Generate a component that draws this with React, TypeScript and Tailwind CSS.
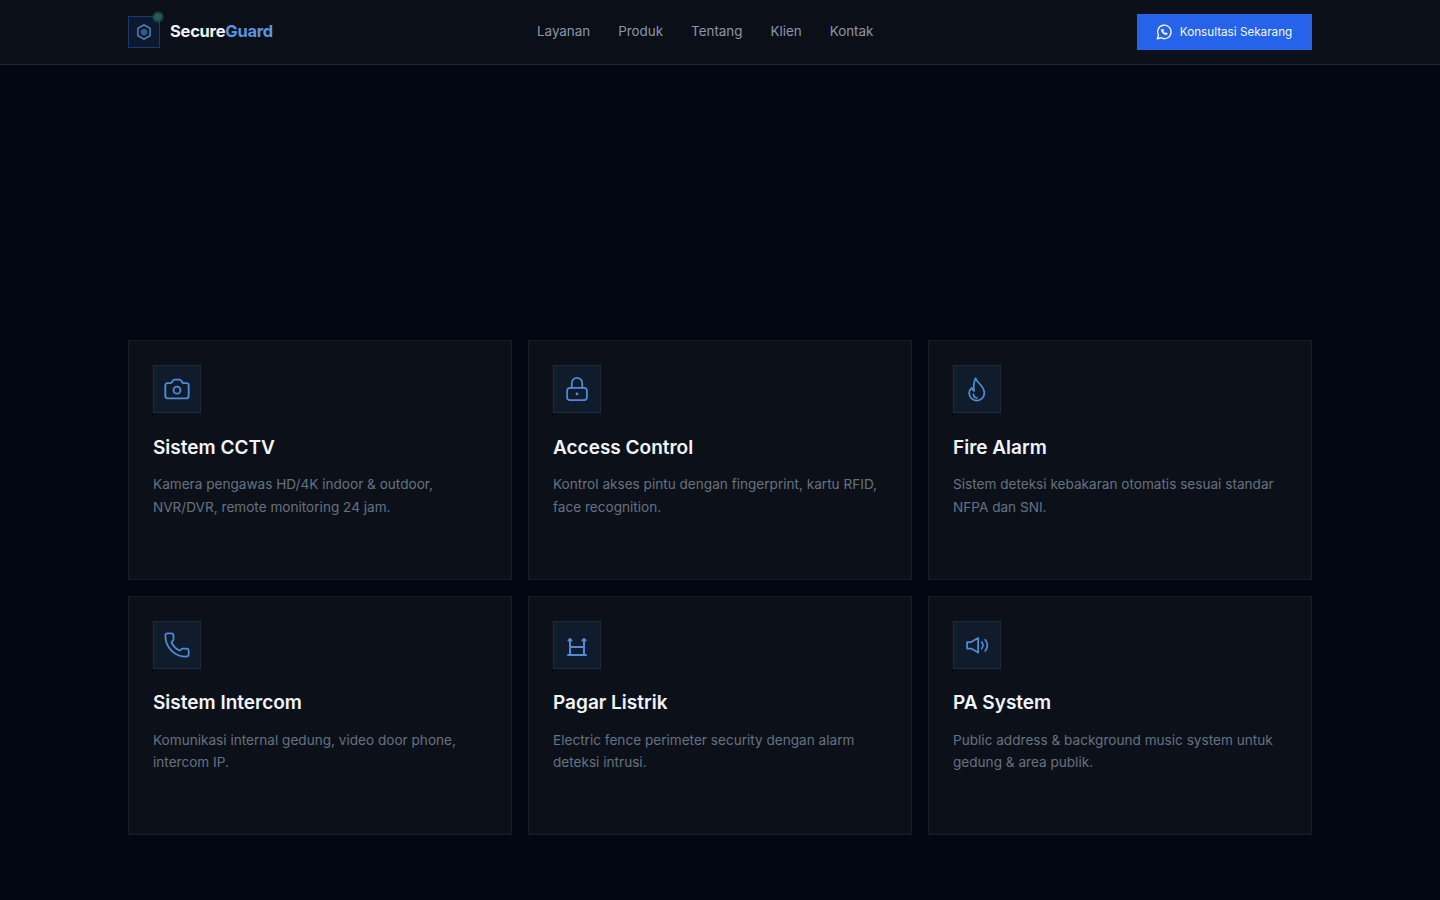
import { Camera, Phone } from "lucide-react"
import { ReactNode } from "react"

const LockIcon = () => (
  <svg width="28" height="28" viewBox="0 0 24 24" fill="none" stroke="currentColor" strokeWidth="1.5" strokeLinecap="round" strokeLinejoin="round">
    <rect x="3.5" y="11" width="17" height="10.5" rx="2.5" />
    <path d="M7.5 11V7a4.5 4.5 0 0 1 9 0v4" />
    <circle cx="12" cy="16.2" r="1.2" fill="currentColor" stroke="none" />
  </svg>
)

const FlameIcon = () => (
  <svg width="28" height="28" viewBox="0 0 24 24" fill="none" stroke="currentColor" strokeWidth="1.5" strokeLinecap="round" strokeLinejoin="round">
    <path d="M10.9 2.8C11.5 6.5 18.3 9 18.3 15.5A6.5 6.5 0 0 1 5.3 15.5C5.3 13.8 6 12.3 7.4 11C7.8 12.5 8.5 13.3 9.5 13.7C9 10 9.3 5.5 10.9 2.8z" />
    <path d="M9 16.5c0 2 1.3 3 3 3" />
  </svg>
)

const FenceIcon = () => (
  <svg width="28" height="28" viewBox="0 0 24 24" fill="none" stroke="currentColor" strokeWidth="1.7" strokeLinecap="round" strokeLinejoin="round">
    <path d="M6 7v13.6M18 7v13.6M6 13.7h12M4.3 20.6h15.4" />
    <path d="M4.7 8.2L6 6.9l1.3 1.3M16.7 8.2L18 6.9l1.3 1.3" />
  </svg>
)

const SpeakerIcon = () => (
  <svg width="28" height="28" viewBox="0 0 24 24" fill="none" stroke="currentColor" strokeWidth="1.5" strokeLinecap="round" strokeLinejoin="round">
    <path d="M3.5 9.5H7l6-3.5v12.5l-6-3.5H3.5z" />
    <path d="M16 9.5a4 4 0 0 1 0 5.5" />
    <path d="M19 7.5a7 7 0 0 1 0 9.5" />
  </svg>
)

const WhatsappIcon = () => (
  <svg width="18" height="18" viewBox="0 0 24 24" fill="none" stroke="currentColor" strokeWidth="1.8" strokeLinecap="round" strokeLinejoin="round">
    <path d="M3 21l1.6-4.7A9 9 0 1 1 8 19.7L3 21z" />
    <path d="M8.5 9c0 3.5 3 6.5 6.5 6.5.9 0 1.5-.6 1.5-1.5l-2-1-1 .8c-1.100-.5-2-1.400-2.500-2.500l.8-1-1-2c-.9 0-1.800.7-1.800.7z" fill="currentColor" strokeWidth="0.8" />
  </svg>
)

const LogoIcon = () => (
  <svg width="18" height="18" viewBox="0 0 24 24" fill="none" stroke="currentColor" strokeWidth="1.8" strokeLinejoin="round">
    <path d="M12 2.5l8.2 4.75v9.5L12 21.5l-8.2-4.75v-9.5z" />
    <circle cx="12" cy="12" r="4.5" fill="currentColor" fillOpacity="0.55" stroke="none" />
  </svg>
)

const services: { icon: ReactNode; title: string; text: string[] }[] = [
  { icon: <Camera size={28} strokeWidth={1.6} />, title: "Sistem CCTV", text: ["Kamera pengawas HD/4K indoor & outdoor,", "NVR/DVR, remote monitoring 24 jam."] },
  { icon: <LockIcon />, title: "Access Control", text: ["Kontrol akses pintu dengan fingerprint, kartu RFID,", "face recognition."] },
  { icon: <FlameIcon />, title: "Fire Alarm", text: ["Sistem deteksi kebakaran otomatis sesuai standar", "NFPA dan SNI."] },
  { icon: <Phone size={28} strokeWidth={1.5} />, title: "Sistem Intercom", text: ["Komunikasi internal gedung, video door phone,", "intercom IP."] },
  { icon: <FenceIcon />, title: "Pagar Listrik", text: ["Electric fence perimeter security dengan alarm", "deteksi intrusi."] },
  { icon: <SpeakerIcon />, title: "PA System", text: ["Public address & background music system untuk", "gedung & area publik."] },
]

const nav = ["Layanan", "Produk", "Tentang", "Klien", "Kontak"]

export default function App() {
  return (
    <div className="min-h-[900px] bg-[#030712] font-['Inter',sans-serif]">
      <header className="h-[65px] bg-[#0a0f18] border-b border-[#1a2738]">
        <div className="mx-auto w-[1184px] h-16 flex items-center">
          <div className="w-[409px] flex items-center gap-2.5">
            <div className="relative w-8 h-8 flex items-center justify-center border border-[#1e3a66] bg-[#0c1a2f] text-[#5a8ed0]">
              <LogoIcon />
              <span className="absolute -top-[5px] -right-[4px] w-2.5 h-2.5 rounded-full bg-[#285a57] blur-[1px]"></span>
            </div>
            <div className="-mt-0.5 text-[16.5px] font-bold tracking-[-0.25px] text-[#f1f5f9]">
              Secure<span className="text-[#5a94e2]">Guard</span>
            </div>
          </div>
          <nav className="-mt-px flex items-center gap-7 text-[13.4px] text-[#8d97a6]">
            {nav.map((n) => (
              <span key={n}>{n}</span>
            ))}
          </nav>
          <button className="ml-auto w-[175px] h-9 pr-[2px] flex items-center justify-center gap-[7px] bg-[#2563eb] text-[#f4f7ff] text-[11.7px]">
            <WhatsappIcon />
            <span className="pt-0.5">Konsultasi Sekarang</span>
          </button>
        </div>
      </header>

      <section className="h-[275px]"></section>

      <main className="mx-auto w-[1184px] grid grid-cols-3 gap-4">
        {services.map((s) => (
          <div key={s.title} className="h-[239.5px] p-6 bg-[#0c1119] border border-[#171e2a]">
            <div className="w-12 h-12 flex items-center justify-center bg-[#101b2b] border border-[#1c2a3d] text-[#4f8cd6]">
              {s.icon}
            </div>
            <h3 className="mt-[20.5px] text-[19px] leading-7 font-semibold text-[#f1f5f9]">{s.title}</h3>
            <p className="mt-[11.8px] text-[13.6px] leading-[22.4px] text-[#667181]">
              {s.text[0]}
              <br />
              {s.text[1]}
            </p>
          </div>
        ))}
      </main>
    </div>
  )
}
